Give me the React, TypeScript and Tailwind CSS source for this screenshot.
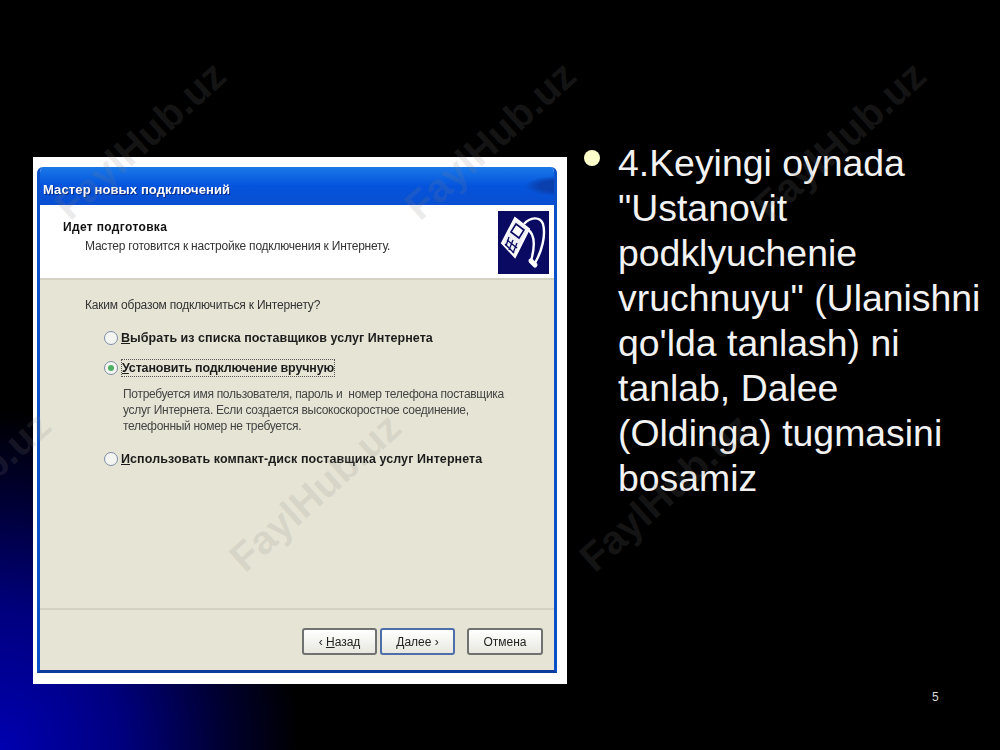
import React from 'react'

// Watermark positions: these sit over the slide, so they are absolute
const watermarks = [
  'left-[140px] top-[140px]',
  'left-[490px] top-[140px]',
  'left-[840px] top-[140px]',
  'left-[-35px] top-[490px]',
  'left-[315px] top-[492px]',
  'left-[665px] top-[492px]',
]

function Radio({ checked = false }: { checked?: boolean }) {
  return (
    <span className="flex h-[14px] w-[14px] shrink-0 items-center justify-center rounded-full border border-[#7f8ea8] bg-[#f4f4f0]">
      {checked && <span className="h-[6px] w-[6px] rounded-full bg-[#4caf63]" />}
    </span>
  )
}

function XpButton({ children, active = false, className = '' }: { children: React.ReactNode; active?: boolean; className?: string }) {
  return (
    <div
      className={`flex h-[27px] w-[75px] items-center justify-center rounded-[3px] border-2 bg-gradient-to-b from-white to-[#e8e8e0] text-[12px] text-[#222] ${
        active ? 'border-[#4d6ea8]' : 'border-[#6f7270]'
      } ${className}`}
    >
      {children}
    </div>
  )
}

function PlugIcon() {
  return (
    <div className="ml-auto mt-[6px] h-[63px] w-[51px] shrink-0 bg-[#0a0a62]">
      <svg viewBox="0 0 51 63" className="h-full w-full" fill="none">
        <path d="M26 13 C32 6 42 5 45 13 C48 24 44 40 37 52" stroke="#fff" strokeWidth="2.4" />
        <path d="M29 18 C36 22 38 32 33 50" stroke="#fff" strokeWidth="2.4" />
        <path d="M33 50 L37 54" stroke="#fff" strokeWidth="5" strokeLinecap="round" />
        <path d="M17 7 L31 18 L17 46 L4 32 Z" fill="#eef0f4" stroke="#fff" strokeWidth="2" />
        <path d="M18 13 L26 19 L21 27 L13 21 Z" fill="#fff" stroke="#0a0a62" strokeWidth="1.6" />
        <path d="M9 29 L19 37 M7 33 L16 42" stroke="#0a0a62" strokeWidth="1.3" />
        <path d="M11 26 L8 35 M15 29 L11 39 M19 32 L15 42" stroke="#0a0a62" strokeWidth="1.3" />
      </svg>
    </div>
  )
}

function WizardShot() {
  return (
    <div className="h-[527px] w-[534px] shrink-0 bg-white pb-[11px] pl-[4px] pr-[10px] pt-[10px] blur-[0.5px] font-['Liberation_Sans',sans-serif]">
      <div className="flex h-full flex-col overflow-hidden rounded-t-[6px] border-x-[3px] border-b-[3px] border-x-[#0a50c8] border-b-[#0a3a9c]">
        {/* Title bar */}
        <div className="-mx-[3px] flex h-[38px] shrink-0 items-start bg-[radial-gradient(ellipse_32px_10px_at_100%_50%,#0a3fae_55%,transparent_100%),linear-gradient(to_bottom,#1a78e8,#0454dc_50%,#0a4fd0)] pl-[6px] pt-[14px]">
          <span className="text-[13px] font-bold leading-[18px] tracking-[0.12px] text-white [text-shadow:1px_1px_0_#0a2a80]">
            Мастер новых подключений
          </span>
        </div>

        {/* Header */}
        <div className="flex h-[75px] shrink-0 border-b-2 border-[#d4d2c2] bg-white pr-[5px]">
          <div className="pl-[23px] pt-[15px]">
            <div className="text-[12px] font-bold leading-[14px] tracking-[0.35px] text-[#111]">Идет подготовка</div>
            <div className="pl-[22px] pt-[5px] text-[12px] leading-[14px] tracking-[-0.22px] text-[#333]">
              Мастер готовится к настройке подключения к Интернету.
            </div>
          </div>
          <PlugIcon />
        </div>

        {/* Body */}
        <div className="flex flex-1 flex-col bg-[#e6e5d5]">
          <div className="flex-1 pl-[45px] pt-[18px]">
            <div className="text-[12px] leading-[14px] tracking-[-0.2px] text-[#333]">Каким образом подключиться к Интернету?</div>

            <div className="-ml-[20px] mt-[18px] flex items-center gap-[3px] pl-[39px]">
              <Radio />
              <span className="text-[12.5px] font-bold leading-[16px] tracking-[0.04px] text-[#1c1c1c]">
                <span className="underline">В</span>ыбрать из списка поставщиков услуг Интернета
              </span>
            </div>

            <div className="-ml-[20px] mt-[13px] flex items-center gap-[3px] pl-[39px]">
              <Radio checked />
              <span className="border border-dotted border-[#555] text-[12.5px] font-bold leading-[16px] tracking-[-0.16px] text-[#1c1c1c]">
                <span className="underline">У</span>становить подключение вручную
              </span>
            </div>

            <div className="ml-[38px] mt-[9px] w-[400px] text-[12px] leading-[16px] tracking-[-0.3px] text-[#444]">
              <div>Потребуется имя пользователя, пароль и&nbsp; номер телефона поставщика</div>
              <div>услуг Интернета. Если создается высокоскоростное соединение,</div>
              <div>телефонный номер не требуется.</div>
            </div>

            <div className="-ml-[20px] mt-[17px] flex items-center gap-[3px] pl-[39px]">
              <Radio />
              <span className="text-[12.5px] font-bold leading-[16px] tracking-[0.08px] text-[#1c1c1c]">
                <span className="underline">И</span>спользовать компакт-диск поставщика услуг Интернета
              </span>
            </div>
          </div>

          {/* Footer buttons */}
          <div className="flex h-[62px] shrink-0 items-start border-t-2 border-[#d4d2c2] pl-[262px] pt-[18px]">
            <XpButton>
              ‹&nbsp;<span className="underline">Н</span>азад
            </XpButton>
            <XpButton active className="ml-[3px]">
              <span className="underline">Д</span>алее&nbsp;›
            </XpButton>
            <XpButton className="ml-[12px] w-[76px]">Отмена</XpButton>
          </div>
        </div>
      </div>
    </div>
  )
}

const lines = [
  '4.Keyingi oynada',
  '"Ustanovit',
  'podklyuchenie',
  'vruchnuyu" (Ulanishni',
  "qo'lda tanlash) ni",
  'tanlab, Dalee',
  '(Oldinga) tugmasini',
  'bosamiz',
]

export default function App() {
  return (
    <div className="relative h-[750px] w-[1000px] overflow-hidden bg-black bg-[radial-gradient(ellipse_300px_340px_at_0_100%,#0000b0_0%,#000080_40%,#000030_75%,#000_100%)] font-['Liberation_Sans',sans-serif]">
      <div className="flex items-start pl-[33px] pt-[157px]">
        <WizardShot />

        {/* Slide text */}
        <div className="ml-[17px] flex">
          <span className="mt-[-7px] h-[16px] w-[16px] shrink-0 rounded-full bg-[#ffffcc]" />
          <div className="ml-[18px] mt-[-16px] text-[37.4px] leading-[45px] text-[#f2f2f2]">
            {lines.map((line) => (
              <div key={line} className="whitespace-nowrap">
                {line}
              </div>
            ))}
          </div>
        </div>
      </div>

      <div className="absolute left-[932px] top-[690px] text-[12px] leading-[14px] text-[#d8d8d8]">5</div>

      {watermarks.map((pos) => (
        <div
          key={pos}
          className={`pointer-events-none absolute -translate-x-1/2 -translate-y-1/2 -rotate-[42deg] whitespace-nowrap text-[40px] font-bold leading-none text-[#80808028] ${pos}`}
        >
          FaylHub.uz
        </div>
      ))}
    </div>
  )
}
